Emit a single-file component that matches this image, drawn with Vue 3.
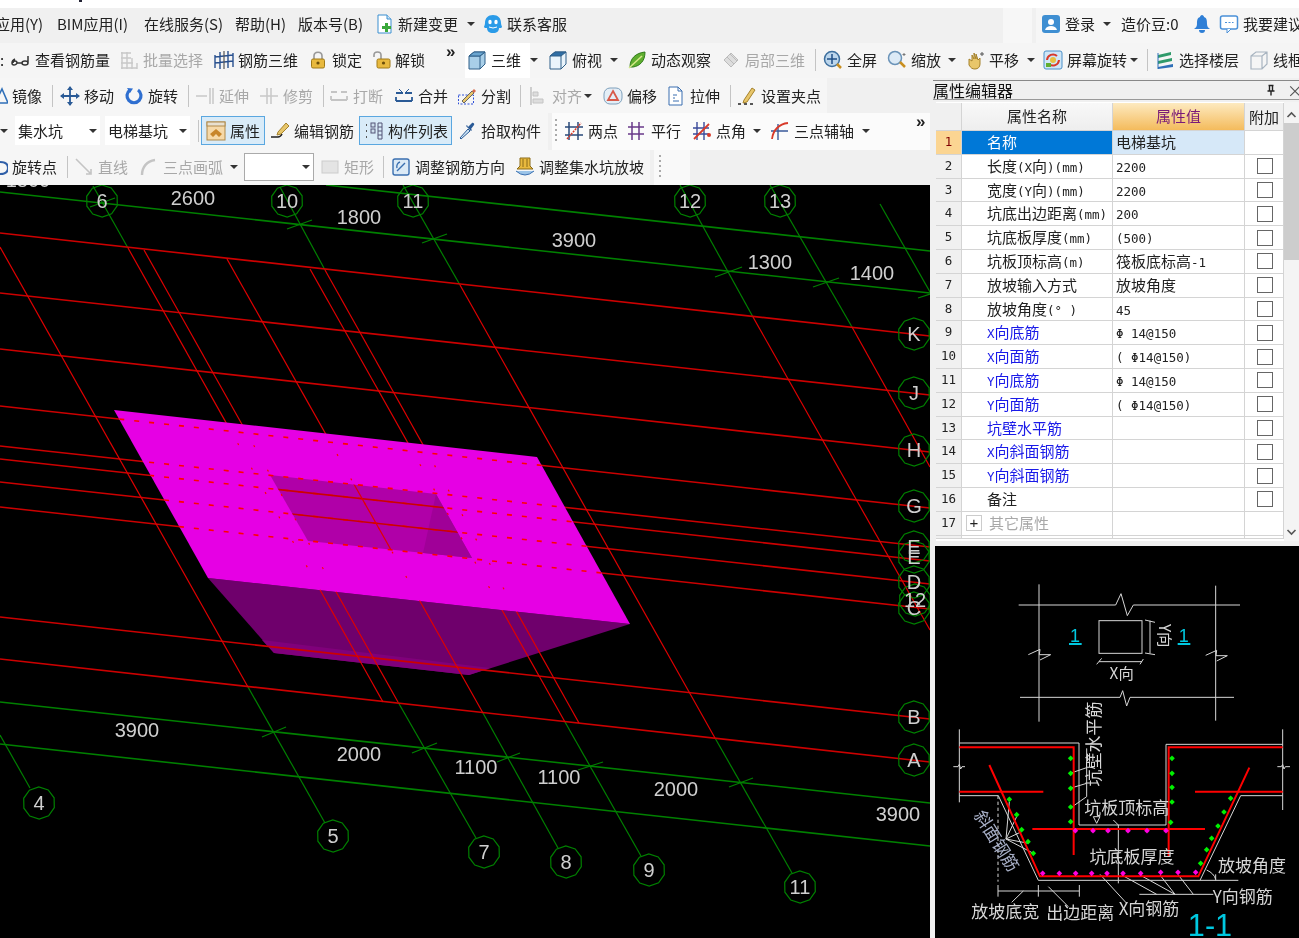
<template>
  <div class="app">
    <div class="top-strip"><i class="speck"></i></div>

    <div class="toolrow menubar">
      <ToolItems :items="menuRow" />
    </div>
    <div class="toolrow row-main">
      <ToolItems :items="mainRow" />
    </div>

    <div class="workspace">
      <div class="left-col">
        <div class="toolrow row-edit">
          <ToolItems :items="editRow" />
        </div>
        <div class="toolrow row-comp">
          <ToolItems :items="compRow" />
        </div>
        <div class="toolrow row-draw">
          <ToolItems :items="drawRow" />
        </div>

        <svg class="canvas" viewBox="0 185 930 753" width="930" height="753">
          <defs>
            <clipPath id="pitTop"><polygon :points="topFace" /></clipPath>
            <clipPath id="pitHole"><polygon :points="holeFace" /></clipPath>
          </defs>

          <polygon points="208,578 630,624 469,675 274,653" fill="#6f006c" />
          <polygon points="262,640 274,653 469,675 490,668" fill="#80007b" />

          <line v-for="(l, i) in greenLines" :key="'g' + i" v-bind="l" class="axis" />
          <line v-for="(l, i) in redLines" :key="'r' + i" v-bind="l" class="beam" />

          <polygon :points="topFace" fill="#e600e4" />
          <polygon :points="holeFace" fill="#b000a8" />
          <polygon points="436,494 472,558 423,553" fill="#a00098" />

          <g clip-path="url(#pitTop)">
            <line v-for="(l, i) in pitRows" :key="'d' + i" v-bind="l" class="beam dash" />
            <line v-for="(l, i) in pitCols" :key="'c' + i" v-bind="l" class="beam dots" />
          </g>
          <g clip-path="url(#pitHole)">
            <line v-for="(l, i) in holeLines" :key="'h' + i" v-bind="l" class="beam" />
          </g>

          <polygon
            v-for="c in bubbles"
            :key="c.t + c.x + c.y"
            :points="bubblePoints(c)"
            class="bubble"
          />
          <line v-for="(l, i) in ticks" :key="'t' + i" v-bind="l" class="axis" />
          <text v-for="c in bubbles" :key="'b' + c.t + c.x + c.y" :x="c.x" :y="c.y + 7" class="bubble-label">{{ c.t }}</text>
          <text v-for="d in dims" :key="d.t + d.x" :x="d.x" :y="d.y + 7" class="dim">{{ d.t }}</text>
        </svg>
      </div>

      <div class="right-col">
        <div class="panel-title">
          <span>属性编辑器</span>
          <svg class="pin" viewBox="0 0 12 12" width="12" height="12">
            <path d="M3.5 1.5h5M4.5 1.5v5.5M7.5 1.5v5.5M2.5 7h7M6 7v4.5" stroke="#222" stroke-width="1.4" fill="none" />
          </svg>
          <span class="close">×</span>
        </div>

        <div class="prop-wrap">
          <div class="prop-table">
            <div class="prop-row head">
              <div class="c-num"></div>
              <div class="c-name">属性名称</div>
              <div class="c-val">属性值</div>
              <div class="c-add">附加</div>
            </div>
            <div
              v-for="(p, i) in props"
              :key="i"
              class="prop-row"
              :class="{ first: i === 0, link: p.link, muted: p.more }"
            >
              <div class="c-num">{{ i + 1 }}</div>
              <div class="c-name">
                <span v-if="p.more" class="plus">+</span>
                <span v-for="(s, j) in split(p.name)" :key="j" :class="{ latin: s.latin }">{{ s.text }}</span>
              </div>
              <div class="c-val">
                <span v-for="(s, j) in split(p.val)" :key="j" :class="{ latin: s.latin }">{{ s.text }}</span>
              </div>
              <div class="c-add"><i v-if="i > 0 && !p.more" class="check"></i></div>
            </div>
            <div class="prop-row stub">
              <div class="c-num"></div><div class="c-name"></div><div class="c-val"></div><div class="c-add"></div>
            </div>
          </div>
          <div class="scroll">
            <svg viewBox="0 0 15 10" width="15" height="10"><path d="M3.5 7l4-4 4 4" stroke="#555" stroke-width="1.6" fill="none" /></svg>
            <div class="thumb"></div>
            <svg class="down" viewBox="0 0 15 10" width="15" height="10"><path d="M3.5 3l4 4 4-4" stroke="#555" stroke-width="1.6" fill="none" /></svg>
          </div>
        </div>

        <svg class="preview" viewBox="15 3 1092 1176" width="364" height="392">
          <g class="wl">
            <path d="M327 118V530M857 122V527" />
            <path d="M266 180H557L573 146L592 212L610 180H930" />
            <path d="M270 457H570L578 437L590 483L600 457H912" />
            <path d="M295 329L330 313L328 329H362L330 345" />
            <path d="M827 331L860 316L858 332H892L860 348" />
            <rect x="507" y="227" width="129" height="98" />
            <path d="M660 227V325M645 225L675 232M645 324L675 329" />
            <path d="M507 350H636M500 358L515 340M630 358L640 342" />

            <path d="M88 553V772M88 594H447V840H708V598H1058M1058 553V795" />
            <path d="M88 752H205L325 1006H925M810 1006L932 752H1058" />
            <path d="M70 665H84L88 658L92 672L96 665H105M1042 665H1054L1058 658L1062 672L1066 665H1080" />
            <path d="M204 752V1010" stroke-dasharray="10 8" />
            <path d="M204 1038H448M204 1020V1055M325 1020V1055M448 1020V1055" />
            <path d="M470 610V755L420 790M470 668L420 685M470 715L420 730" />
            <path d="M228 882L238 770M228 882L260 815M228 882L275 860M228 882L295 895M228 882L310 925" />
            <path d="M510 988L590 1075M575 990L680 1048M630 990L735 1048M690 990L735 1048M745 990L790 1048M628 1048H850" />
            <path d="M550 825L565 840V1015M490 815H510L500 835Z" />
            <path d="M857 988V1006M830 975Q852 985 857 1003" />
            <path d="M355 1025L415 1085M280 1038L245 1072" />
          </g>
          <g class="rd">
            <path d="M88 607H431V930" />
            <path d="M88 740H340M795 740H1058M307 852H825" />
            <path d="M178 660L330 994H805L958 668" />
            <path d="M716 935V607H1058" />
          </g>
          <rect v-for="(d, i) in greenDots" :key="'gd' + i" :x="d[0] - 6" :y="d[1] - 6" width="12" height="12" :transform="`rotate(45 ${d[0]} ${d[1]})`" fill="#00f000" />
          <rect v-for="(d, i) in pinkDots" :key="'pd' + i" :x="d[0] - 6" :y="d[1] - 6" width="12" height="12" :transform="`rotate(45 ${d[0]} ${d[1]})`" fill="#ff00e0" />

          <text x="435" y="290" class="cy one">1</text>
          <text x="761" y="290" class="cy one">1</text>
          <rect x="417" y="294" width="38" height="6" fill="#00c8e0" />
          <rect x="743" y="294" width="38" height="6" fill="#00c8e0" />
          <text x="575" y="402" class="tx sm">X向</text>
          <text x="686" y="272" class="tx sm" transform="rotate(90 686 272)">Y向</text>
          <text x="590" y="808" class="tx">坑板顶标高</text>
          <text x="606" y="953" class="tx">坑底板厚度</text>
          <text x="966" y="981" class="tx">放坡角度</text>
          <text x="938" y="1075" class="tx">Y向钢筋</text>
          <text x="657" y="1110" class="tx">X向钢筋</text>
          <text x="226" y="1120" class="tx">放坡底宽</text>
          <text x="451" y="1123" class="tx">出边距离</text>
          <text x="530" y="617" class="tx" transform="rotate(-90 510 617)">坑壁水平筋</text>
          <text x="200" y="906" class="tx slant" transform="rotate(58 200 888)">斜面钢筋</text>
          <text x="840" y="1172" class="cy big">1-1</text>
        </svg>
      </div>
    </div>
  </div>
</template>

<script setup>
import { h } from 'vue'

// toolbar icons, all in a 20x20 box
const icons = {
  doc: '<path d="M4 1h9l4 4v14H4z" fill="#fff" stroke="#3a8fd0"/><path d="M13 1v4h4" fill="#cfe6f7" stroke="#3a8fd0"/><path d="M11 9h3v3h3v3h-3v3h-3v-3H8v-3h3z" fill="#3aa83a"/>',
  qq: '<path d="M10 1c5 0 8 3 8 8 0 2 1 3 1 4s-2 1-3 1c0 3-2 5-6 5s-6-2-6-5c-1 0-3 0-3-1s1-2 1-4c0-5 3-8 8-8z" fill="#2a9be8"/><ellipse cx="7" cy="8" rx="1.7" ry="2.3" fill="#fff"/><ellipse cx="13" cy="8" rx="1.7" ry="2.3" fill="#fff"/><path d="M6 13q4 2 8 0" stroke="#fff" fill="none"/>',
  user: '<rect x="1" y="1" width="18" height="18" rx="3" fill="#3f8fd2"/><circle cx="10" cy="8" r="3" fill="#fff"/><path d="M4 16c1-3 3-4 6-4s5 1 6 4z" fill="#fff"/>',
  bell: '<path d="M10 1c1 0 2 1 2 2 3 1 3 4 3 7 0 2 1 4 3 5H2c2-1 3-3 3-5 0-3 0-6 3-7 0-1 1-2 2-2z" fill="#2f7fd6"/><path d="M7 16h6c0 2-1 3-3 3s-3-1-3-3z" fill="#2f7fd6"/>',
  chat: '<rect x="1.5" y="2" width="17" height="13" rx="2" fill="#fff" stroke="#4a90d8" stroke-width="1.5"/><path d="M8 15v4l4-4" fill="#fff" stroke="#4a90d8"/><path d="M6 8.5h2M9.5 8.5h2M13 8.5h1.5" stroke="#4a90d8" stroke-width="1.2"/>',
  hook: '<path d="M4 9c-2 1-3 2-3 4s1 2 2 2 3-1 3-2-1-2-2-2-2 1-2 2M6 13h5M11 13c0 1 1 2 3 2s3-1 3-2-1-2-3-2-3 1-3 2M17 13V6" stroke="#333" stroke-width="1.5" fill="none"/>',
  batch: '<path d="M2 3h10M2 8h10M2 13h12M2 18h16M3 2v17M8 2v17M13 8v11M18 13v6" stroke="#c8c8c8" stroke-width="1.4" fill="none"/>',
  rebar3d: '<path d="M1 5v13M6 2v17M14 1v17M19 3v14M1 7l18-2M1 13l18-2" stroke="#28508f" stroke-width="1.4" fill="none"/><path d="M10 1v18" stroke="#555" stroke-width="1.2"/>',
  lock: '<path d="M6 9V6c0-5 8-5 8 0v3" stroke="#999" stroke-width="1.6" fill="none"/><rect x="3.5" y="9" width="13" height="9" rx="1.5" fill="#e8b93e" stroke="#a07a18"/><circle cx="10" cy="13" r="1.6" fill="#6b4e0a"/>',
  unlock: '<path d="M3 7V5c0-4 7-4 7 0v4" stroke="#999" stroke-width="1.6" fill="none"/><rect x="6" y="9" width="13" height="9" rx="1.5" fill="#e8b93e" stroke="#a07a18"/><circle cx="12.5" cy="13" r="1.6" fill="#6b4e0a"/>',
  cube: '<path d="M2 6l5-4h11v12l-5 5H2z" fill="#a9cfe8" stroke="#2f5f88"/><path d="M2 6h11v13M13 6l5-4" fill="none" stroke="#2f5f88"/><path d="M2 6l5-4h11l-5 4z" fill="#6aa5cf" stroke="#2f5f88"/>',
  topview: '<path d="M2 6l5-4h11v12l-5 5H2z" fill="#eaf4fb" stroke="#2f5f88"/><path d="M2 6l5-4h11l-5 4z" fill="#2f6ea5" stroke="#2f5f88"/><path d="M13 6v13" stroke="#2f5f88"/>',
  orbit: '<path d="M3 17C3 8 9 3 18 2c0 9-5 14-12 15z" fill="#5fae2f" stroke="#2f7a1a"/><path d="M2 18L15 6" stroke="#d6e88a" stroke-width="1.5"/>',
  part3d: '<path d="M3 10l7-7 7 7-7 7z" fill="#ddd" stroke="#bbb"/><path d="M6 7l7 7M9 4l7 7" stroke="#bbb"/>',
  full: '<circle cx="9" cy="9" r="7.5" fill="#bcd6ec" stroke="#3d6f9e" stroke-width="1.5"/><path d="M9 4v10M4 9h10" stroke="#1f4f86" stroke-width="1.5"/><path d="M14 14l4 4" stroke="#c98f20" stroke-width="2.5"/>',
  zoom: '<circle cx="8" cy="8" r="6.5" fill="#dceaf6" stroke="#6a93b8" stroke-width="1.5"/><path d="M13 12l5 5" stroke="#c98f20" stroke-width="2.5"/><path d="M17 3v3M15.5 4.5h3" stroke="#777"/>',
  pan: '<path d="M4 12V9l3 2V5l2 4V3l2 6V4l2 6 2-2v6c0 3-2 5-5 5s-4-1-6-4z" fill="#e8c66a" stroke="#a5822c"/><path d="M15 4h4M17 2v4" stroke="#555"/>',
  spin: '<rect x="1" y="1" width="18" height="18" rx="2" fill="#cfe6f7" stroke="#4a90c8"/><path d="M4 10a6 6 0 0 1 10-4" stroke="#d83a2a" stroke-width="2" fill="none"/><path d="M16 10a6 6 0 0 1-10 4" stroke="#d83a2a" stroke-width="2" fill="none"/><circle cx="10" cy="10" r="3" fill="#e8c040"/><rect x="3" y="13" width="5" height="4" fill="#5fae2f"/>',
  floor: '<path d="M3 5l13-3v3L3 8zM3 11l14-3v3L3 14z" fill="#2f9a6a"/><path d="M3 17l15-3v3L3 19z" fill="#2f6fb8"/><path d="M3 3v16" stroke="#2f6fb8"/>',
  wire: '<path d="M2 6l5-4h11v12l-5 5H2zM2 6h11v13M13 6l5-4" fill="none" stroke="#a8b4c0" stroke-width="1.2"/>',
  move: '<path d="M10 1v18M1 10h18" stroke="#2a5a96" stroke-width="1.8"/><path d="M10 0l3 4H7zM10 20l3-4H7zM0 10l4-3v6zM20 10l-4-3v6z" fill="#2a5a96"/>',
  rot: '<path d="M6 4a7 7 0 1 0 8 0" stroke="#2f6fd0" stroke-width="3.2" fill="none"/><path d="M3 2l6 .5L6 7z" fill="#2f6fd0"/>',
  extend: '<path d="M1 10h11M15 2v16M18 2v16" stroke="#c8c8c8" stroke-width="1.5"/>',
  trim: '<path d="M1 10h18M8 2v16M12 2v16" stroke="#c8c8c8" stroke-width="1.5"/>',
  cut: '<path d="M2 6h6M12 6h6M2 14h16M2 14V10M18 14V10" stroke="#c4c4c4" stroke-width="1.8"/>',
  merge: '<path d="M2 7h7M11 7h7M2 15h16M2 15v-4M18 15v-4" stroke="#2a5a96" stroke-width="1.8"/><path d="M5 3l3 3M15 3l-3 3" stroke="#2a5a96"/>',
  split: '<rect x="1.5" y="9" width="15" height="9" fill="none" stroke="#2f50d8" stroke-dasharray="2 1.5"/><path d="M5 15L15 5l2 2L7 17z" fill="#e8c66a" stroke="#666"/><path d="M15 5l2-2 2 2-2 2" fill="#d86a4a"/>',
  align: '<path d="M3 1v18" stroke="#c4c4c4" stroke-width="1.6"/><path d="M5 6h5v4H5zM5 13h10v4H5z" fill="#ddd" stroke="#c4c4c4"/>',
  offset: '<rect x="1" y="2" width="18" height="16" rx="6" fill="#e4eef6" stroke="#7ea0bc"/><path d="M10 5l5 9H5z" fill="none" stroke="#d85a4a" stroke-width="1.8"/>',
  stretch: '<path d="M3 1h9l4 4v14H3z" fill="#fff" stroke="#3a6fb0"/><path d="M12 1v4h4M7 9h4M7 12h2M7 15h6" fill="none" stroke="#3a6fb0"/>',
  grip: '<path d="M1 18h3M7 18h3M13 18h3" stroke="#222" stroke-width="1.6"/><path d="M7 14L15 2l3 2-8 12-4 1z" fill="#e8c66a" stroke="#a5822c"/>',
  attr: '<rect x="1" y="1" width="18" height="18" fill="#f6d9a8" stroke="#b08a4a"/><rect x="1" y="1" width="18" height="4" fill="#e8e0d0" stroke="#b08a4a"/><path d="M4 13l6-5 6 5-3 3-3-3-3 3z" fill="#c8862a"/>',
  edit: '<path d="M1 16h7c2 0 3-1 4-3" stroke="#222" stroke-width="1.6" fill="none"/><path d="M8 11L16 2l3 3-8 8-4 1z" fill="#e8c66a" stroke="#a5822c"/>',
  list: '<path d="M2 4h2M2 10h2M2 16h2" stroke="#555" stroke-width="2" stroke-dasharray="1 1"/><rect x="7" y="2" width="4" height="4" fill="#cfe0ee" stroke="#557"/><rect x="7" y="8" width="4" height="4" fill="#cfe0ee" stroke="#557"/><path d="M14 2h4v16h-4zM14 6h4M14 10h4M14 14h4" fill="none" stroke="#557"/>',
  pick: '<path d="M3 17l8-9 2 2-9 8z" fill="#cfe6f7" stroke="#2a5a96"/><path d="M11 6l4-4c1-1 3 1 2 2l-3 4 1 1-1 1-5-5 1-1z" fill="#2a5a96"/>',
  two: '<path d="M5 1v18M14 1v18M1 6h18M1 14h18" stroke="#2a4a7a" stroke-width="1.5"/><path d="M3 18L17 2" stroke="#d83a2a" stroke-width="1.5" stroke-dasharray="2 1"/>',
  para: '<path d="M5 1v18M12 1v18M1 6h16M1 13h16" stroke="#6a3a8a" stroke-width="1.5"/>',
  angle: '<path d="M5 1v18M12 1v18M1 7h16M1 13h16" stroke="#3a4a9a" stroke-width="1.4"/><path d="M2 18L17 3" stroke="#d83a2a" stroke-width="1.8"/><circle cx="17" cy="14" r="2" fill="#d83a2a"/>',
  three: '<path d="M8 3v16M1 10h17" stroke="#3a5a9a" stroke-width="1.4"/><path d="M2 18C3 9 9 3 18 2" stroke="#d83a2a" stroke-width="1.8" fill="none"/>',
  line: '<path d="M2 2l15 15M12 17h5v-5" stroke="#c4c4c4" stroke-width="1.6" fill="none"/>',
  arc: '<path d="M3 18C3 10 8 4 16 3" stroke="#c4c4c4" stroke-width="2.4" fill="none"/>',
  rect: '<rect x="2" y="4" width="16" height="12" fill="#e4e4e4" stroke="#ccc"/>',
  adjust: '<rect x="2" y="2" width="16" height="16" rx="2" fill="#dceaf6" stroke="#3a6fb0" stroke-width="1.4"/><path d="M6 14L14 6M9 5a5 5 0 0 0-3 6" stroke="#3a6fb0" stroke-width="1.4" fill="none"/>',
  slope: '<path d="M5 1h10v8l3 3H2l3-3z" fill="#e8b93e" stroke="#8a6a18"/><path d="M8 2v8M12 2v8" stroke="#8a6a18"/><path d="M1 14q9 8 18 0" fill="#9cc4e8" stroke="#3a6fb0"/>',
  // these two sit half off the left edge of the window
  mirrorCut: '<path d="M14 3L20 17H7z" fill="none" stroke="#2f6fb8" stroke-width="1.6"/>',
  rotCut: '<path d="M12 5c5 0 8 2 8 6s-3 6-8 6" stroke="#2f5fa8" stroke-width="2" fill="none"/>'
}

// every toolbar item is placed from the x where its label starts
const ICON_STEP = 24
const tool = (tx, icon, t, opts = {}) => ({ x: tx - ICON_STEP, icon, t, ...opts })
const label = (x, t, opts = {}) => ({ x, t, ...opts })
const caret = x => ({ x: x - 4, kind: 'caret' })
const sep = x => ({ x, kind: 'sep' })
const grip = x => ({ x, kind: 'grip' })
const more = x => ({ x, kind: 'more' })

const menuRow = [
  label(-5, '应用(Y)'),
  label(57, 'BIM应用(I)'),
  label(144, '在线服务(S)'),
  label(235, '帮助(H)'),
  label(298, '版本号(B)'),
  tool(398, 'doc', '新建变更'),
  caret(471),
  tool(507, 'qq', '联系客服'),
  tool(1065, 'user', '登录'),
  caret(1107),
  label(1121, '造价豆:0'),
  tool(1216, 'bell', ''),
  tool(1243, 'chat', '我要建议')
]

const mainRow = [
  label(0, ':'),
  tool(35, 'hook', '查看钢筋量'),
  tool(143, 'batch', '批量选择', { off: true }),
  tool(238, 'rebar3d', '钢筋三维'),
  tool(332, 'lock', '锁定'),
  tool(395, 'unlock', '解锁'),
  more(446),
  tool(491, 'cube', '三维'),
  caret(534),
  tool(572, 'topview', '俯视'),
  caret(614),
  tool(651, 'orbit', '动态观察'),
  tool(745, 'part3d', '局部三维', { off: true }),
  sep(815),
  tool(847, 'full', '全屏'),
  tool(911, 'zoom', '缩放'),
  caret(952),
  tool(989, 'pan', '平移'),
  caret(1031),
  tool(1067, 'spin', '屏幕旋转'),
  caret(1134),
  sep(1147),
  tool(1179, 'floor', '选择楼层'),
  tool(1273, 'wire', '线框')
]

const editRow = [
  tool(12, 'mirrorCut', '镜像'),
  sep(52),
  tool(84, 'move', '移动'),
  tool(148, 'rot', '旋转'),
  sep(188),
  tool(219, 'extend', '延伸', { off: true }),
  tool(283, 'trim', '修剪', { off: true }),
  sep(323),
  tool(353, 'cut', '打断', { off: true }),
  tool(418, 'merge', '合并'),
  tool(481, 'split', '分割'),
  sep(520),
  tool(552, 'align', '对齐', { off: true }),
  caret(588),
  tool(627, 'offset', '偏移'),
  tool(690, 'stretch', '拉伸'),
  sep(730),
  tool(761, 'grip', '设置夹点')
]

const compRow = [
  caret(4),
  { x: 15, kind: 'select', t: '集水坑', w: 85 },
  { x: 105, kind: 'select', t: '电梯基坑', w: 85 },
  sep(198),
  { x: 201, icon: 'attr', t: '属性', on: true, w: 64 },
  tool(294, 'edit', '编辑钢筋'),
  { x: 359, icon: 'list', t: '构件列表', on: true, w: 93 },
  tool(481, 'pick', '拾取构件'),
  grip(555),
  tool(588, 'two', '两点'),
  tool(651, 'para', '平行'),
  tool(716, 'angle', '点角'),
  caret(757),
  tool(794, 'three', '三点辅轴'),
  caret(866),
  more(916)
]

const drawRow = [
  tool(12, 'rotCut', '旋转点'),
  sep(67),
  tool(98, 'line', '直线', { off: true }),
  tool(163, 'arc', '三点画弧', { off: true }),
  caret(234),
  { x: 244, kind: 'combo', w: 70 },
  tool(344, 'rect', '矩形', { off: true }),
  sep(383),
  tool(415, 'adjust', '调整钢筋方向'),
  tool(539, 'slope', '调整集水坑放坡'),
  grip(659)
]

// one flex row of toolbar items: the width of each item is the distance to the next one
const ToolItems = props => {
  const items = props.items
  return items.map((it, i) => {
    const next = items[i + 1]
    const span = next ? next.x - it.x : 200
    const width = it.w ?? span
    const style = { width: width + 'px', marginRight: span - width + 'px' }
    if (i === 0) style.marginLeft = it.x + 'px'
    if (it.kind === 'caret') return h('i', { class: 'caret-box', style }, [h('i', { class: 'caret' })])
    if (it.kind === 'sep') return h('i', { class: 'sep-box', style }, [h('i', { class: 'sep' })])
    if (it.kind === 'grip') return h('i', { class: 'grip-box', style }, [h('i', { class: 'grip' })])
    if (it.kind === 'more') return h('span', { class: 'more', style }, '»')
    if (it.kind === 'select' || it.kind === 'combo') {
      return h('div', { class: it.kind, style }, [h('span', it.t), h('i', { class: 'caret' })])
    }
    return h('div', { class: ['tool', { off: it.off, on: it.on }], style }, [
      it.icon ? h('svg', { class: 'ico', viewBox: '0 0 20 20', width: 20, height: 20, innerHTML: icons[it.icon] }) : null,
      h('span', it.t)
    ])
  })
}
ToolItems.props = ['items']

// drawing canvas, in page coordinates
const hLine = (y1, y2) => ({ x1: 0, y1, x2: 930, y2, class: 'wide' })
const seg = (x1, y1, x2, y2) => ({ x1, y1, x2, y2 })

const rowY = {
  K: [233, 336], J: [293, 395], H: [349, 452], G: [406, 508], E1: [446, 547],
  E2: [459, 561], D: [482, 584], C: [507, 609], B: [617, 719], A: [659, 762]
}

const redLines = [
  ...Object.values(rowY).map(r => hLine(r[0], r[1])),
  seg(0, 247, 248, 687),
  seg(128, 248, 383, 702),
  seg(144, 250, 398, 702),
  seg(227, 259, 483, 713),
  seg(310, 269, 565, 722),
  seg(325, 270, 579, 723),
  seg(460, 285, 715, 738),
  seg(753, 317, 930, 630),
  seg(852, 327, 930, 467)
]

const greenLines = [
  hLine(192, 293),
  { ...seg(326, 185, 930, 251), class: 'wide' },
  hLine(702, 803),
  hLine(744, 846),
  seg(0, 735, 30, 788),
  seg(248, 687, 325, 823),
  seg(93, 186, 128, 248),
  seg(398, 702, 476, 838),
  seg(483, 713, 558, 848),
  seg(565, 722, 641, 856),
  seg(280, 187, 325, 270),
  seg(403, 185, 460, 285),
  seg(715, 738, 792, 873),
  seg(680, 185, 753, 317),
  seg(770, 185, 852, 327),
  seg(880, 204, 930, 292)
]

const ticks = [
  seg(90, 207, 115, 198), seg(287, 229, 312, 220), seg(422, 243, 447, 234),
  seg(715, 277, 742, 267), seg(813, 287, 839, 278), seg(918, 298, 930, 294),
  seg(262, 737, 286, 727), seg(412, 753, 437, 743), seg(497, 762, 520, 753),
  seg(578, 770, 603, 762), seg(729, 787, 753, 778)
]

const topFace = '114,410 537,457 630,624 208,578'
const holeFace = '270,475 436,494 472,558 308,541'
const pitRows = ['G', 'E1', 'E2', 'D', 'C'].map(k => hLine(rowY[k][0], rowY[k][1]))
const pitCols = [
  seg(128, 248, 383, 702), seg(144, 250, 398, 702), seg(227, 259, 483, 713),
  seg(310, 269, 565, 722), seg(325, 270, 579, 723)
]
const holeLines = [hLine(...rowY.E2), hLine(...rowY.D), seg(227, 259, 483, 713)]

const bubbles = [
  { t: '6', x: 102, y: 201 }, { t: '10', x: 287, y: 201 }, { t: '11', x: 413, y: 201 },
  { t: '12', x: 690, y: 201 }, { t: '13', x: 780, y: 201 },
  { t: 'K', x: 914, y: 334 }, { t: 'J', x: 914, y: 393 }, { t: 'H', x: 914, y: 450 },
  { t: 'G', x: 914, y: 506 }, { t: 'E', x: 914, y: 547 }, { t: 'E', x: 914, y: 557 },
  { t: 'D', x: 914, y: 582 }, { t: 'C', x: 914, y: 608 }, { t: '12', x: 915, y: 600 },
  { t: 'B', x: 914, y: 717 }, { t: 'A', x: 914, y: 760 },
  { t: '4', x: 39, y: 803 }, { t: '5', x: 333, y: 836 }, { t: '7', x: 484, y: 852 },
  { t: '8', x: 566, y: 862 }, { t: '9', x: 649, y: 870 }, { t: '11', x: 800, y: 887 }
]

const bubblePoints = c => {
  const pts = []
  for (let i = 0; i < 10; i++) {
    const a = (i / 10) * Math.PI * 2 + 0.3
    pts.push(`${(c.x + Math.cos(a) * 16).toFixed(1)},${(c.y + Math.sin(a) * 16).toFixed(1)}`)
  }
  return pts.join(' ')
}

const dims = [
  { t: '1800', x: 28, y: 180 }, { t: '2600', x: 193, y: 198 }, { t: '1800', x: 359, y: 217 },
  { t: '3900', x: 574, y: 240 }, { t: '1300', x: 770, y: 262 }, { t: '1400', x: 872, y: 273 },
  { t: '3900', x: 137, y: 730 }, { t: '2000', x: 359, y: 754 }, { t: '1100', x: 476, y: 767 },
  { t: '1100', x: 559, y: 777 }, { t: '2000', x: 676, y: 789 }, { t: '3900', x: 898, y: 814 }
]

// properties table
const props = [
  { name: '名称', val: '电梯基坑' },
  { name: '长度(X向)(mm)', val: '2200' },
  { name: '宽度(Y向)(mm)', val: '2200' },
  { name: '坑底出边距离(mm)', val: '200' },
  { name: '坑底板厚度(mm)', val: '(500)' },
  { name: '坑板顶标高(m)', val: '筏板底标高-1' },
  { name: '放坡输入方式', val: '放坡角度' },
  { name: '放坡角度(° )', val: '45' },
  { name: 'X向底筋', val: 'Φ 14@150', link: true },
  { name: 'X向面筋', val: '( Φ14@150)', link: true },
  { name: 'Y向底筋', val: 'Φ 14@150', link: true },
  { name: 'Y向面筋', val: '( Φ14@150)', link: true },
  { name: '坑壁水平筋', val: '', link: true },
  { name: 'X向斜面钢筋', val: '', link: true },
  { name: 'Y向斜面钢筋', val: '', link: true },
  { name: '备注', val: '' },
  { name: '其它属性', val: '', more: true }
]

// the table font has half-width latin, so latin runs get their own span
const split = s =>
  (s.match(/[\x00-\x7f°Φ]+|[^\x00-\x7f°Φ]+/g) || []).map(text => ({
    text,
    latin: /^[\x00-\x7f°Φ]/.test(text)
  }))

// section preview markers
const greenDots = [
  [422, 640], [422, 685], [422, 730], [422, 786], [422, 830],
  [726, 640], [726, 685], [726, 727], [726, 771], [722, 832],
  [238, 763], [260, 809], [275, 854], [294, 890], [310, 925],
  [902, 760], [882, 801], [864, 843], [845, 880], [830, 914], [812, 955]
]
const pinkDots = [
  [338, 985], [388, 985], [437, 985], [485, 985], [531, 985], [579, 985], [632, 985], [692, 982], [744, 982], [797, 982],
  [436, 857], [489, 857], [534, 857], [594, 857], [651, 857], [708, 857]
]
</script>

<style scoped>
.app {
  width: 1299px;
  height: 938px;
  overflow: hidden;
  display: flex;
  flex-direction: column;
  background: #f0f0f0;
  color: #222;
  font-family: "Noto Sans CJK SC", "Liberation Sans", sans-serif;
  font-size: 15px;
  filter: blur(0.35px);
}
.top-strip {
  height: 8px;
  flex: none;
  background: #fff;
  padding-left: 79px;
}
.speck {
  display: block;
  width: 3px;
  height: 2px;
  background: #223;
}
.toolrow {
  height: 35px;
  flex: none;
  box-sizing: border-box;
  display: flex;
  align-items: center;
  overflow: hidden;
  white-space: nowrap;
}
.menubar {
  padding-bottom: 3px;
  background: linear-gradient(90deg, #f0f0f0 1003px, #f7f7f7 1003px, #f7f7f7 1032px, #f0f0f0 1032px, #f0f0f0 1036px, #f6f6f6 1036px);
}
.row-main {
  padding-bottom: 2px;
  background: linear-gradient(90deg, #f5f5f5 465px, #fff 465px, #fff 530px, #f5f5f5 530px);
}
.row-edit {
  background: linear-gradient(90deg, #f6f6f6 827px, #f0f0f0 827px);
}
.row-comp {
  height: 37px;
  padding-bottom: 2px;
  background: linear-gradient(90deg, #f6f6f6 548px, #f0f0f0 548px, #f0f0f0 552px, #fbfbfb 552px);
}
.row-draw {
  padding-bottom: 2px;
  background: linear-gradient(90deg, #f6f6f6 650px, #f0f0f0 650px, #f0f0f0 654px, #f9f9f9 654px, #f9f9f9 690px, #f0f0f0 690px);
}
.toolrow :deep(.tool) {
  flex: none;
  display: flex;
  align-items: center;
  line-height: 20px;
  box-sizing: border-box;
}
.toolrow :deep(.ico) {
  flex: none;
  width: 20px;
  height: 20px;
  margin-right: 4px;
  overflow: hidden;
}
.toolrow :deep(.off) {
  color: #a8a8a8;
}
.toolrow :deep(.on) {
  height: 29px;
  padding-left: 4px;
  background: #d9ebf8;
  border: 1.5px solid #5aa7e0;
}
.toolrow :deep(.caret-box),
.toolrow :deep(.sep-box),
.toolrow :deep(.grip-box) {
  flex: none;
  display: block;
}
.toolrow :deep(.caret) {
  display: block;
  width: 0;
  height: 0;
  border-left: 4px solid transparent;
  border-right: 4px solid transparent;
  border-top: 4px solid #333;
}
.toolrow :deep(.sep) {
  display: block;
  width: 1px;
  height: 22px;
  background: #c4c4c4;
}
.toolrow :deep(.grip) {
  display: block;
  width: 2px;
  height: 24px;
  background: repeating-linear-gradient(#aaa 0 2px, transparent 2px 5px);
}
.toolrow :deep(.more) {
  flex: none;
  font-family: "Liberation Sans", sans-serif;
  font-size: 17px;
  font-weight: 700;
  line-height: 14px;
  align-self: flex-start;
  margin-top: 2px;
}
.toolrow :deep(.select) {
  flex: none;
  height: 29px;
  box-sizing: border-box;
  padding: 0 3px;
  display: flex;
  align-items: center;
  justify-content: space-between;
  background: #fff;
}
.toolrow :deep(.combo) {
  flex: none;
  height: 28px;
  box-sizing: border-box;
  padding: 0 3px 0 0;
  display: flex;
  align-items: center;
  justify-content: flex-end;
  background: #fff;
  border: 1.5px solid #aaa;
}

.workspace {
  flex: 1;
  min-height: 0;
  display: flex;
}
.left-col {
  width: 930px;
  flex: none;
  display: flex;
  flex-direction: column;
}
.canvas {
  display: block;
  flex: none;
  background: #000;
}
.axis {
  stroke: #008000;
  stroke-width: 1.2;
}
.beam {
  stroke: #e00000;
  stroke-width: 1.2;
}
.wide {
  stroke-width: 1.6;
}
.beam.wide {
  stroke: #cc0000;
}
.beam.dash {
  stroke: #ff0000;
  stroke-dasharray: 5 10;
}
.beam.dots {
  stroke: #ff0000;
  stroke-dasharray: 2 26;
}
.bubble {
  fill: none;
  stroke: #008000;
  stroke-width: 1.2;
}
.bubble-label,
.dim {
  fill: #cfcfcf;
  font-family: "Liberation Sans", sans-serif;
  font-size: 20px;
  text-anchor: middle;
}

.right-col {
  flex: 1;
  min-width: 0;
  padding-top: 2px;
  display: flex;
  flex-direction: column;
}
.panel-title {
  height: 18px;
  margin-left: 3px;
  flex: none;
  display: flex;
  align-items: center;
  border-top: 1.5px solid #888;
  border-bottom: 1.5px solid #999;
  background: #f0f0f0;
  font-size: 16px;
  line-height: 14px;
  color: #111;
  overflow: hidden;
}
.pin {
  margin-left: auto;
  margin-right: 10px;
}
.close {
  width: 12px;
  font-size: 16px;
  color: #555;
  overflow: hidden;
}
.prop-wrap {
  margin: 2px 0 0 6px;
  height: 439px;
  flex: none;
  display: flex;
  background: #fff;
  overflow: hidden;
}
.prop-table {
  width: 348px;
  flex: none;
  padding-top: 1px;
}
.prop-row {
  display: grid;
  grid-template-columns: 26px 151px 132px 39px;
  height: 23.8px;
  line-height: 22px;
  color: #222;
  font-size: 15px;
}
.prop-row > div {
  box-sizing: border-box;
  border-right: 1.5px solid #d4d4d4;
  border-bottom: 1.5px solid #d4d4d4;
  overflow: hidden;
  white-space: nowrap;
}
.c-num {
  background: #f0f0f0;
  text-align: center;
  font-family: "DejaVu Sans Mono", monospace;
  font-size: 12.5px;
}
.c-name {
  padding-left: 25px;
}
.c-val {
  padding-left: 3px;
}
.c-add {
  display: flex;
  align-items: center;
  justify-content: center;
  padding-left: 1px;
}
.latin {
  font-family: "DejaVu Sans Mono", monospace;
  font-size: 12.5px;
  white-space: pre;
}
.head {
  height: 28px;
  line-height: 26px;
  text-align: center;
}
.head .c-name {
  padding: 0;
  background: linear-gradient(#f8f8f8, #eee);
}
.head .c-val {
  padding: 0;
  color: #7a1a78;
  background: linear-gradient(#fdeac0, #f4bb5c);
}
.head .c-add {
  background: #f0f0f0;
  font-size: 15px;
  padding: 0;
}
.first .c-num {
  background: #fbd592;
  color: #800000;
}
.first .c-name {
  background: #0078d7;
  color: #fff;
}
.first .c-val {
  background: #d6e8f8;
}
.link .c-name {
  color: #1a1ae8;
}
.muted .c-name {
  color: #a8a8a8;
  padding-left: 4px;
}
.plus {
  display: inline-block;
  width: 14px;
  height: 14px;
  margin-right: 7px;
  border: 1px solid #ccc;
  color: #222;
  font-family: "Liberation Sans", sans-serif;
  font-size: 15px;
  line-height: 13px;
  text-align: center;
  vertical-align: 1px;
}
.check {
  display: block;
  width: 16px;
  height: 16px;
  box-sizing: border-box;
  border: 1.5px solid #666;
  background: #fff;
}
.stub {
  height: 3px;
}
.scroll {
  flex: 1;
  display: flex;
  flex-direction: column;
  background: #f4f4f4;
  padding-top: 8px;
}
.thumb {
  height: 137px;
  margin-top: 3px;
  background: #cdcdcd;
}
.down {
  margin-top: auto;
  margin-bottom: 4px;
}
.preview {
  display: block;
  flex: none;
  margin: 5px 0 0 5px;
  background: #000;
}
.wl path,
.wl rect {
  fill: none;
  stroke: #d6d6d6;
  stroke-width: 3;
}
.rd path {
  fill: none;
  stroke: #ff0000;
  stroke-width: 6;
}
.tx {
  fill: #d6d6d6;
  font-size: 51px;
  text-anchor: middle;
}
.tx.sm {
  font-size: 46px;
}
.tx.slant {
  fill: #a8b0c8;
}
.cy {
  fill: #00c8e0;
  text-anchor: middle;
  font-family: "Liberation Sans", sans-serif;
}
.cy.one {
  font-size: 54px;
}
.cy.big {
  font-size: 92px;
}
</style>

<style>
html,
body {
  margin: 0;
  background: #fff;
}
</style>
